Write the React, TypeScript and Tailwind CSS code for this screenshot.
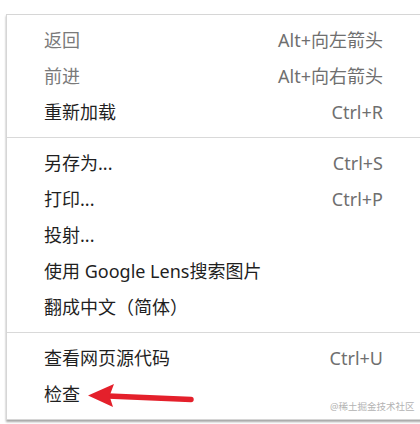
import React from 'react';

type Item = { label: string; shortcut?: string; disabled?: boolean };

const groups: Item[][] = [
  [
    { label: '返回', shortcut: 'Alt+向左箭头', disabled: true },
    { label: '前进', shortcut: 'Alt+向右箭头', disabled: true },
    { label: '重新加载', shortcut: 'Ctrl+R' },
  ],
  [
    { label: '另存为...', shortcut: 'Ctrl+S' },
    { label: '打印...', shortcut: 'Ctrl+P' },
    { label: '投射...' },
    { label: '使用 Google Lens搜索图片' },
    { label: '翻成中文（简体）' },
  ],
  [
    { label: '查看网页源代码', shortcut: 'Ctrl+U' },
    { label: '检查' },
  ],
];

/* ── Menu row ─────────────────────────────────────────────── */
function MenuRow({ item }: { item: Item }) {
  return (
    <div className="flex h-[36px] items-center justify-between pl-[37px] pr-[52px]">
      <span className={item.disabled ? 'text-[#7a7a7a]' : 'text-[#1f1f1f]'}>{item.label}</span>
      {item.shortcut && <span className="text-[#6f6f6f]">{item.shortcut}</span>}
    </div>
  );
}

/* ── Red annotation arrow ─────────────────────────────────── */
function Arrow() {
  return (
    <svg className="absolute left-0 top-0" width="420" height="424" viewBox="0 0 420 424">
      <line x1="108" y1="396" x2="191" y2="399.5" stroke="#e4202b" strokeWidth="5.5" strokeLinecap="round" />
      <path d="M88 395.5 L114 384 L109.5 396 L113 407 Z" fill="#e4202b" />
    </svg>
  );
}

export default function App() {
  return (
    <div
      className="relative h-[424px] w-[420px] overflow-hidden bg-white pl-[6px] pt-[14px] text-[18px] leading-none"
      style={{ fontFamily: '"Noto Sans", "Noto Sans CJK SC", sans-serif' }}
    >
      <div className="w-[430px] border border-[#d6d6d6] bg-white py-[7px] shadow-[0_2px_2px_rgba(0,0,0,0.35)]">
        {groups.map((group, gi) => (
          <div key={gi}>
            {gi > 0 && <div className="my-[7px] h-px bg-[#d9d9d9]" />}
            {group.map((item) => (
              <MenuRow key={item.label} item={item} />
            ))}
          </div>
        ))}
      </div>

      {/* Watermark */}
      <span className="absolute left-[330px] top-[402px] text-[9.5px] text-[#b3b3b3]">@稀土掘金技术社区</span>

      <Arrow />
    </div>
  );
}
